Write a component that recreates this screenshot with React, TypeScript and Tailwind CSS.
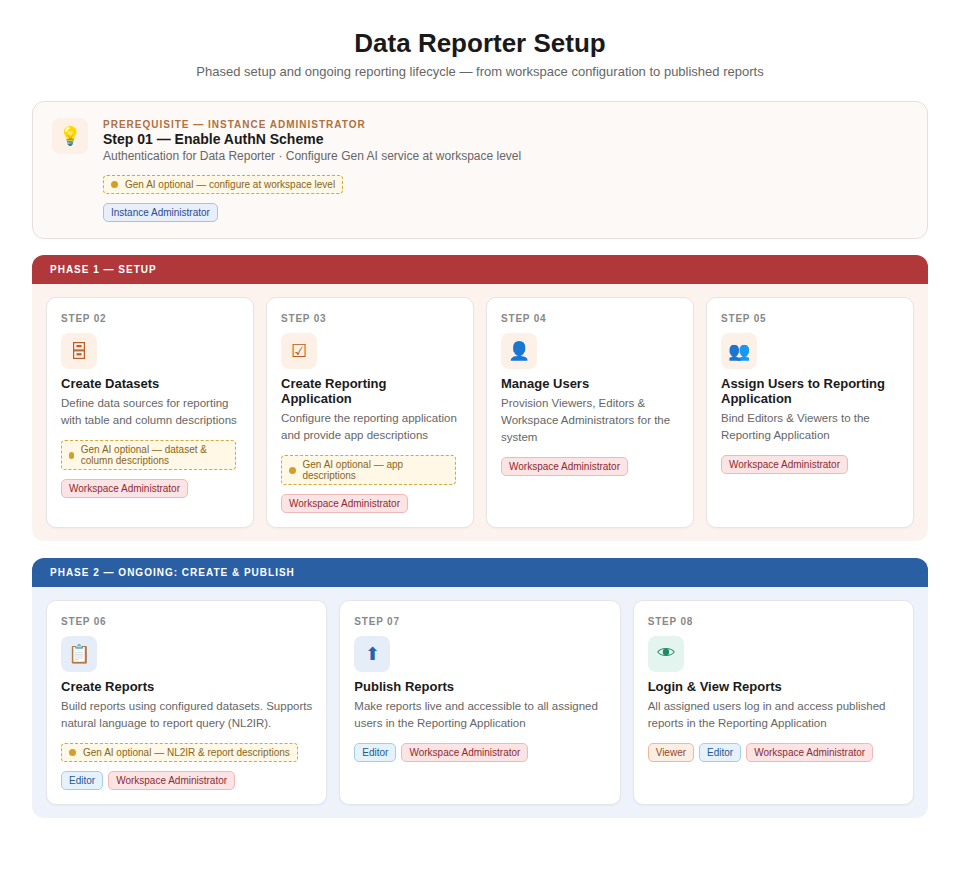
import type { ReactNode } from "react";

const FONT = "font-['Liberation_Sans',Arial,sans-serif]";

type Role = "instance" | "workspace" | "editor" | "viewer";

const ROLE_STYLES: Record<Role, { label: string; className: string }> = {
  instance: { label: "Instance Administrator", className: "bg-[#e8effb] border-[#a9c0e8] text-[#2b4a8f]" },
  workspace: { label: "Workspace Administrator", className: "bg-[#fde4e4] border-[#f0b8b8] text-[#8c2b35]" },
  editor: { label: "Editor", className: "bg-[#e6f2fb] border-[#a6cde8] text-[#24598f]" },
  viewer: { label: "Viewer", className: "bg-[#fdeee4] border-[#ecb99a] text-[#8f4a24]" },
};

const RoleTag = ({ role }: { role: Role }) => {
  const { label, className } = ROLE_STYLES[role];
  return (
    <span className={`inline-block rounded-[5px] border px-[7px] py-[2px] text-[10px] leading-[13px] font-medium ${className}`}>
      {label}
    </span>
  );
};

const GenAiNote = ({ text, className = "" }: { text: string; className?: string }) => (
  <div className={`flex items-center gap-[7px] rounded-[4px] border border-dashed border-[#d4a93a] bg-[#fff8e6] px-[7px] py-[2.5px] text-[10px] leading-[11.5px] text-[#8a6518] ${className}`}>
    <span className="h-[7px] w-[7px] rounded-full bg-[#d19f2a]" />
    <span>{text}</span>
  </div>
);

const StepIcon = ({ glyph, className }: { glyph: ReactNode; className: string }) => (
  <div className={`flex h-9 w-9 items-center justify-center rounded-lg leading-none ${className}`}>{glyph}</div>
);

// the file cabinet and eye glyphs come out differently from the fallback font
const CabinetIcon = () => (
  <svg className="mb-[2px]" width="12" height="17" viewBox="0 0 12 17" fill="none" stroke="#b85c2a" strokeWidth="1.2">
    <rect x="0.6" y="0.6" width="10.8" height="7.4" />
    <rect x="0.6" y="8.8" width="10.8" height="7.6" />
    <rect x="3.5" y="3" width="5" height="2.2" fill="#b85c2a" stroke="none" />
    <rect x="3.5" y="11.2" width="5" height="2.2" fill="#b85c2a" stroke="none" />
  </svg>
);

const EyeIcon = () => (
  <svg className="mb-[5px]" width="18" height="12" viewBox="0 0 18 12" fill="none">
    <path d="M0.8 6C4 1.4 14 1.4 17.2 6C14 10.6 4 10.6 0.8 6Z" stroke="#2a8a68" strokeWidth="1.1" />
    <circle cx="9" cy="6" r="3.2" fill="#1f8a66" />
  </svg>
);

type Step = {
  num: string;
  glyph: ReactNode;
  iconClass: string;
  title: string;
  desc: string;
  note?: string;
  roles: Role[];
};

const PHASE_1: Step[] = [
  {
    num: "02",
    glyph: <CabinetIcon />,
    iconClass: "bg-[#fdf0e6] text-[#b85c2a] text-[18px]",
    title: "Create Datasets",
    desc: "Define data sources for reporting with table and column descriptions",
    note: "Gen AI optional — dataset & column descriptions",
    roles: ["workspace"],
  },
  {
    num: "03",
    glyph: "☑",
    iconClass: "bg-[#fdf0e6] text-[#b85c2a] text-[18px]",
    title: "Create Reporting Application",
    desc: "Configure the reporting application and provide app descriptions",
    note: "Gen AI optional — app descriptions",
    roles: ["workspace"],
  },
  {
    num: "04",
    glyph: "👤",
    iconClass: "bg-[#fdf0e6] text-[#b85c2a] text-[18px]",
    title: "Manage Users",
    desc: "Provision Viewers, Editors & Workspace Administrators for the system",
    roles: ["workspace"],
  },
  {
    num: "05",
    glyph: "👥",
    iconClass: "bg-[#fdf0e6] text-[#b85c2a] text-[18px]",
    title: "Assign Users to Reporting Application",
    desc: "Bind Editors & Viewers to the Reporting Application",
    roles: ["workspace"],
  },
];

const PHASE_2: Step[] = [
  {
    num: "06",
    glyph: "📋",
    iconClass: "bg-[#e4edf8] text-[#2b5fa8] text-[18px]",
    title: "Create Reports",
    desc: "Build reports using configured datasets. Supports natural language to report query (NL2IR).",
    note: "Gen AI optional — NL2IR & report descriptions",
    roles: ["editor", "workspace"],
  },
  {
    num: "07",
    glyph: "⬆",
    iconClass: "bg-[#e4edf8] text-[#2b5fa8] text-[18px]",
    title: "Publish Reports",
    desc: "Make reports live and accessible to all assigned users in the Reporting Application",
    roles: ["editor", "workspace"],
  },
  {
    num: "08",
    glyph: <EyeIcon />,
    iconClass: "bg-[#e3f5ee]",
    title: "Login & View Reports",
    desc: "All assigned users log in and access published reports in the Reporting Application",
    roles: ["viewer", "editor", "workspace"],
  },
];

const StepCard = ({ step, noteClass }: { step: Step; noteClass: string }) => (
  <div className="rounded-[10px] border border-[#e6e6e6] bg-white p-[14px] shadow-[0_1px_2px_rgba(0,0,0,0.04)]">
    <div className="text-[10px] leading-[13px] font-bold tracking-[0.8px] text-[#888888]">STEP {step.num}</div>
    <div className="mt-[8px]">
      <StepIcon glyph={step.glyph} className={step.iconClass} />
    </div>
    <div className="mt-[7px] text-[13px] leading-[15px] font-bold text-[#1a1a1a]">{step.title}</div>
    <p className="mt-[4px] text-[11.5px] leading-[17px] text-[#666666]">{step.desc}</p>
    {step.note && (
      <div className="mt-[11px] flex">
        <GenAiNote text={step.note} className={noteClass} />
      </div>
    )}
    <div className={`flex flex-wrap gap-[5px] ${step.note ? "mt-[9px]" : "mt-[11px]"}`}>
      {step.roles.map((role) => (
        <RoleTag key={role} role={role} />
      ))}
    </div>
  </div>
);

const Phase = ({
  label,
  headerClass,
  bodyClass,
  gridClass,
  noteClass = "",
  steps,
}: {
  label: string;
  headerClass: string;
  bodyClass: string;
  gridClass: string;
  noteClass?: string;
  steps: Step[];
}) => (
  <section>
    <div className={`flex h-[29px] items-center rounded-t-[12px] px-[18px] text-[10px] font-bold tracking-[1px] text-white ${headerClass}`}>
      {label}
    </div>
    <div className={`grid gap-3 rounded-b-[12px] px-[14px] pt-[13px] pb-[13px] ${gridClass} ${bodyClass}`}>
      {steps.map((step) => (
        <StepCard key={step.num} step={step} noteClass={noteClass} />
      ))}
    </div>
  </section>
);

export default function App() {
  return (
    <div className={`min-h-[886px] bg-white px-8 pt-[28px] ${FONT}`}>
      <h1 className="text-center text-[26px] leading-[30px] font-bold text-[#1a1a1a]">Data Reporter Setup</h1>
      <p className="mt-[6px] text-center text-[13px] leading-[15px] text-[#666666]">
        Phased setup and ongoing reporting lifecycle — from workspace configuration to published reports
      </p>

      <div className="mt-[22px] flex gap-[15px] rounded-[12px] border border-[#e6e0da] bg-[#fdf9f6] py-[16px] pr-5 pl-[19px]">
        <StepIcon glyph="💡" className="bg-[#fdf0e6] text-[#b85c2a] text-[18px]" />
        <div>
          <div className="text-[10px] leading-[13px] font-bold tracking-[1px] text-[#b0703f]">
            PREREQUISITE — INSTANCE ADMINISTRATOR
          </div>
          <div className="text-[14px] leading-[17px] font-bold text-[#1a1a1a]">Step 01 — Enable AuthN Scheme</div>
          <p className="text-[12px] leading-[16px] text-[#666666]">
            Authentication for Data Reporter · Configure Gen AI service at workspace level
          </p>
          <div className="mt-[11px] flex">
            <GenAiNote text="Gen AI optional — configure at workspace level" />
          </div>
          <div className="mt-[9.5px] flex">
            <RoleTag role="instance" />
          </div>
        </div>
      </div>

      <div className="mt-4">
        <Phase
          label="PHASE 1 — SETUP"
          headerClass="bg-[#b0383a]"
          bodyClass="bg-[#fcf3ef]"
          gridClass="grid-cols-4"
          noteClass="max-w-[175px]"
          steps={PHASE_1}
        />
      </div>
      <div className="mt-[17px]">
        <Phase
          label="PHASE 2 — ONGOING: CREATE & PUBLISH"
          headerClass="bg-[#2b5fa3]"
          bodyClass="bg-[#eef2fa]"
          gridClass="grid-cols-3"
          steps={PHASE_2}
        />
      </div>
    </div>
  );
}
